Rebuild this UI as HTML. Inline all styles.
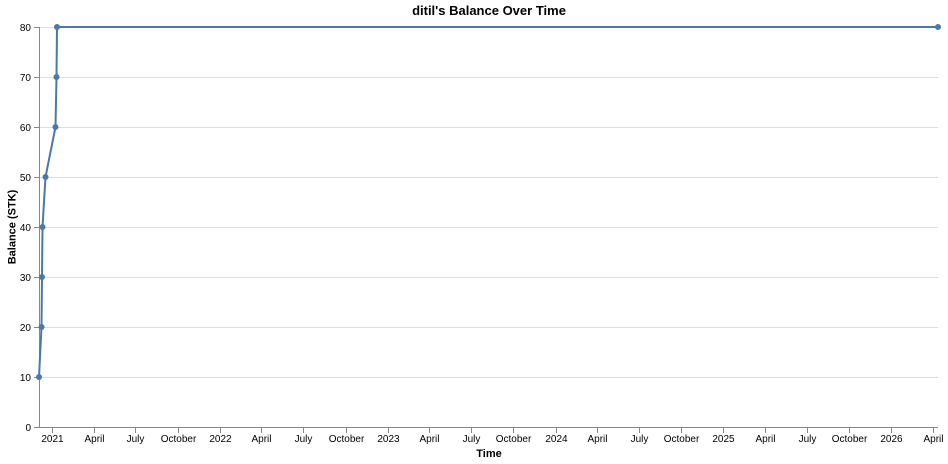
<!DOCTYPE html>
<html><head><style>html,body{margin:0;padding:0;background:#fff;width:948px;height:464px;overflow:hidden}</style></head>
<body>
<svg width="948" height="464" xmlns="http://www.w3.org/2000/svg" font-family="Liberation Sans, sans-serif">
<g stroke="#ddd" stroke-width="1">
<line x1="39" x2="938" y1="27.5" y2="27.5"/><line x1="39" x2="938" y1="77.5" y2="77.5"/>
<line x1="39" x2="938" y1="127.5" y2="127.5"/><line x1="39" x2="938" y1="177.5" y2="177.5"/>
<line x1="39" x2="938" y1="227.5" y2="227.5"/><line x1="39" x2="938" y1="277.5" y2="277.5"/>
<line x1="39" x2="938" y1="327.5" y2="327.5"/><line x1="39" x2="938" y1="377.5" y2="377.5"/>
</g>
<g stroke="#888" stroke-width="1">
<line x1="39.5" x2="39.5" y1="27" y2="428"/>
<line x1="39" x2="938" y1="427.5" y2="427.5"/>
<line x1="34" x2="39" y1="27.5" y2="27.5"/><line x1="34" x2="39" y1="77.5" y2="77.5"/>
<line x1="34" x2="39" y1="127.5" y2="127.5"/><line x1="34" x2="39" y1="177.5" y2="177.5"/>
<line x1="34" x2="39" y1="227.5" y2="227.5"/><line x1="34" x2="39" y1="277.5" y2="277.5"/>
<line x1="34" x2="39" y1="327.5" y2="327.5"/><line x1="34" x2="39" y1="377.5" y2="377.5"/>
<line x1="34" x2="39" y1="427.5" y2="427.5"/>
</g>
<g font-size="10" fill="#000" text-anchor="end">
<text x="31" y="31">80</text><text x="31" y="81">70</text><text x="31" y="131">60</text>
<text x="31" y="181">50</text><text x="31" y="231">40</text><text x="31" y="281">30</text>
<text x="31" y="331">20</text><text x="31" y="381">10</text><text x="31" y="431">0</text>
</g>
<g id="xt" font-size="10" fill="#000" text-anchor="middle"></g>
<g stroke="#888" id="xtk"></g>
<polyline fill="none" stroke="#4c78a8" stroke-width="2" points="39,377 41.5,327 42,277 42.5,227 45.5,177 55.5,127 56.5,77 57,27 938,27"/>
<g fill="#4c78a8">
<circle cx="39" cy="377" r="3"/><circle cx="41.5" cy="327" r="3"/><circle cx="42" cy="277" r="3"/>
<circle cx="42.5" cy="227" r="3"/><circle cx="45.5" cy="177" r="3"/><circle cx="55.5" cy="127" r="3"/>
<circle cx="56.5" cy="77" r="3"/><circle cx="57" cy="27" r="3"/><circle cx="938" cy="27" r="3"/>
</g>
<text x="489" y="15" font-size="13" font-weight="bold" text-anchor="middle">ditil's Balance Over Time</text>
<text x="489" y="457" font-size="11" font-weight="bold" text-anchor="middle">Time</text>
<text transform="translate(15.5,227) rotate(-90)" font-size="11" font-weight="bold" text-anchor="middle">Balance (STK)</text>
<script>
var labels=[];var base=52.2,yr=167.8;
for(var y=0;y<6;y++){var n=["2021","2022","2023","2024","2025","2026"][y];
labels.push([base+y*yr,n]);
if(y<5||true){labels.push([base+y*yr+yr*90/365,"April"]);
if(y<5){labels.push([base+y*yr+yr*181/365,"July"]);labels.push([base+y*yr+yr*273/365,"October"]);}}}
var g=document.getElementById("xt"),t=document.getElementById("xtk"),ns="http://www.w3.org/2000/svg";
labels.forEach(function(l){var x=Math.round(l[0])+0.5;
var e=document.createElementNS(ns,"text");e.setAttribute("x",x);e.setAttribute("y",442);e.textContent=l[1];g.appendChild(e);
var k=document.createElementNS(ns,"line");k.setAttribute("x1",x);k.setAttribute("x2",x);k.setAttribute("y1",428);k.setAttribute("y2",433);t.appendChild(k);});
</script>
</svg>
</body></html>
